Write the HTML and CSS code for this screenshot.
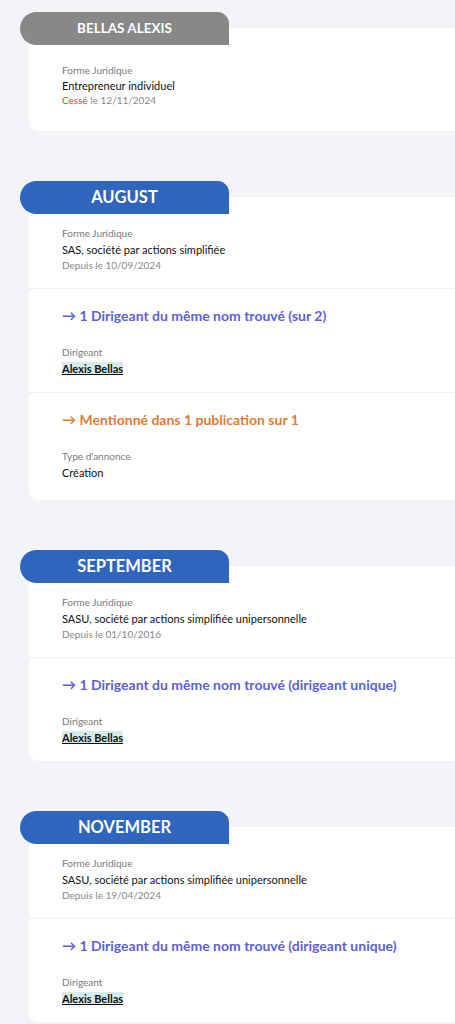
FILE: index.html
```html
<!DOCTYPE html>
<html lang="fr">
<head>
    <meta charset="UTF-8">
    <meta name="viewport" content="width=device-width, initial-scale=1.0">
    <title>Entreprises</title>
    <link rel="stylesheet" href="styles.css">
</head>
<body>
    <div class="list">

        <div class="bloc bloc-ferme">
            <div class="onglet onglet-gris">BELLAS ALEXIS</div>
            <div class="carte">
                <div class="sec sec-info">
                    <div class="lbl">Forme Juridique</div>
                    <div class="val">Entrepreneur individuel</div>
                    <div class="date"><span class="cesse">Cessé</span> le 12/11/2024</div>
                </div>
            </div>
        </div>

        <div class="bloc">
            <div class="onglet">AUGUST</div>
            <div class="carte">
                <div class="sec sec-info">
                    <div class="lbl">Forme Juridique</div>
                    <div class="val">SAS, société par actions simplifiée</div>
                    <div class="date">Depuis le 10/09/2024</div>
                </div>
                <div class="sec">
                    <div class="titre bleu">→ 1 Dirigeant du même nom trouvé (sur 2)</div>
                    <div class="lbl">Dirigeant</div>
                    <div class="val"><a class="nom">Alexis Bellas</a></div>
                </div>
                <div class="sec sec-fin">
                    <div class="titre orange">→ Mentionné dans 1 publication sur 1</div>
                    <div class="lbl">Type d'annonce</div>
                    <div class="val">Création</div>
                </div>
            </div>
        </div>

        <div class="bloc">
            <div class="onglet">SEPTEMBER</div>
            <div class="carte">
                <div class="sec sec-info">
                    <div class="lbl">Forme Juridique</div>
                    <div class="val">SASU, société par actions simplifiée unipersonnelle</div>
                    <div class="date">Depuis le 01/10/2016</div>
                </div>
                <div class="sec">
                    <div class="titre bleu">→ 1 Dirigeant du même nom trouvé (dirigeant unique)</div>
                    <div class="lbl">Dirigeant</div>
                    <div class="val"><a class="nom">Alexis Bellas</a></div>
                </div>
            </div>
        </div>

        <div class="bloc">
            <div class="onglet">NOVEMBER</div>
            <div class="carte">
                <div class="sec sec-info">
                    <div class="lbl">Forme Juridique</div>
                    <div class="val">SASU, société par actions simplifiée unipersonnelle</div>
                    <div class="date">Depuis le 19/04/2024</div>
                </div>
                <div class="sec">
                    <div class="titre bleu">→ 1 Dirigeant du même nom trouvé (dirigeant unique)</div>
                    <div class="lbl">Dirigeant</div>
                    <div class="val"><a class="nom">Alexis Bellas</a></div>
                </div>
            </div>
        </div>

    </div>
</body>
</html>
```

FILE: styles.css
```css
body{
    margin: 0;
    background-color: #f3f4f8;
    font-family: Lato, "Noto Sans", sans-serif;
    overflow-x: hidden;
}
.list{
    padding: 12px 0 0 0;
}
.bloc{
    margin-bottom: 50px;
}
.onglet{
    position: relative;
    z-index: 2;
    width: 209px;
    height: 33px;
    line-height: 33px;
    margin-left: 20px;
    margin-bottom: -17px;
    background-color: #3065bd;
    color: white;
    font-size: 16.5px;
    font-weight: bold;
    text-align: center;
    border-radius: 17px 12px 0 17px;
}
.onglet-gris{
    background-color: #888888;
    font-size: 13.5px;
}
.carte{
    margin-left: 29px;
    margin-right: -30px;
    background-color: white;
    border-radius: 0 0 0 9px;
}
.sec{
    padding: 18px 0 15px 33px;
    border-top: 1px solid #eeeff2;
}
.sec-info{
    border-top: none;
    padding-top: 29px;
    padding-bottom: 15px;
}
.sec-fin{
    padding-bottom: 19px;
}
.bloc-ferme .sec-info{
    padding-top: 35px;
    padding-bottom: 23px;
}
.lbl{
    font-size: 10px;
    line-height: 15px;
    color: #7a7a7a;
}
.val{
    font-size: 11px;
    line-height: 17px;
    color: #111;
}
.bloc-ferme .val{
    line-height: 15px;
}
.date{
    font-size: 10px;
    line-height: 15px;
    color: #888;
}
.cesse{
    color: #f03c3c;
}
.titre{
    font-size: 14px;
    font-weight: bold;
    line-height: 18px;
    margin-bottom: 20px;
}
.bleu{
    color: #5d5fd8;
}
.orange{
    color: #e07c36;
}
.nom{
    font-weight: bold;
    color: #111;
    background-color: #d5ecea;
    text-decoration: underline;
}
```
